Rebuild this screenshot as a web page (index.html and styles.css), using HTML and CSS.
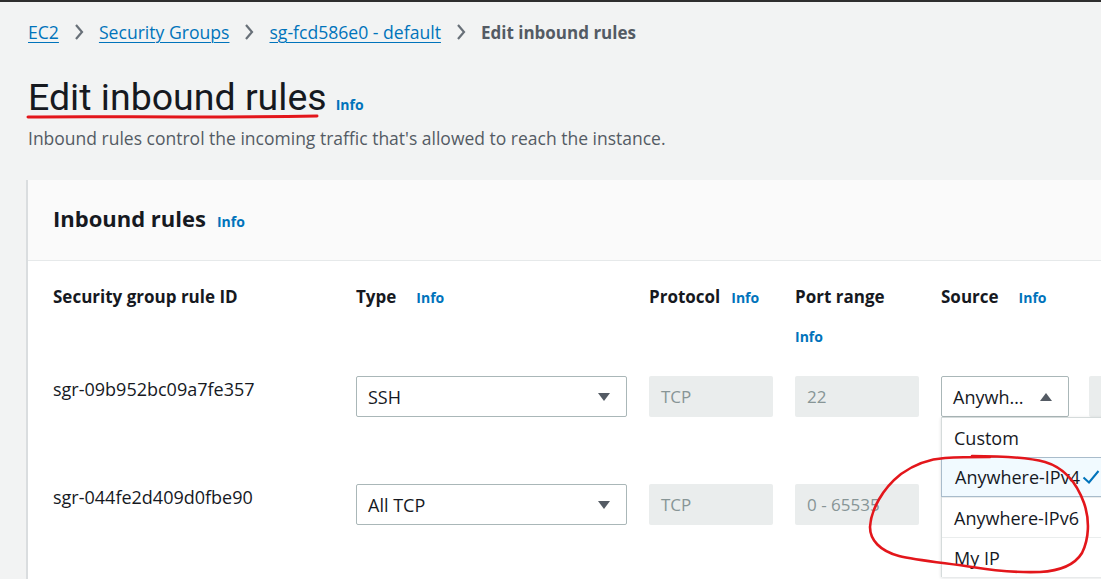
FILE: index.html
```html
<!DOCTYPE html>
<html lang="en">
<head>
<meta charset="utf-8">
<title>Edit inbound rules</title>
<link rel="stylesheet" href="styles.css">
</head>
<body>
<div class="page">
  <nav class="crumbs">
    <a class="crumb-link" href="#">EC2</a>
    <svg class="chev" viewBox="0 0 10 18" width="10" height="18"><path d="M2 2 L8 9 L2 16" fill="none" stroke="#687078" stroke-width="2.2"/></svg>
    <a class="crumb-link" href="#">Security Groups</a>
    <svg class="chev" viewBox="0 0 10 18" width="10" height="18"><path d="M2 2 L8 9 L2 16" fill="none" stroke="#687078" stroke-width="2.2"/></svg>
    <a class="crumb-link" href="#">sg-fcd586e0 - default</a>
    <svg class="chev" viewBox="0 0 10 18" width="10" height="18"><path d="M2 2 L8 9 L2 16" fill="none" stroke="#687078" stroke-width="2.2"/></svg>
    <span class="crumb-current">Edit inbound rules</span>
  </nav>

  <header class="title">
    <h1 class="h1"><span class="h1-text">Edit inbound rules</span><a class="info info-h1" href="#">Info</a></h1>
    <p class="desc">Inbound rules control the incoming traffic that's allowed to reach the instance.</p>
  </header>

  <section class="card">
    <div class="card-head">
      <h2 class="h2">Inbound rules<a class="info info-h2" href="#">Info</a></h2>
    </div>
    <div class="card-body">
      <div class="row head-row">
        <div class="th">Security group rule ID</div>
        <div class="th"><span>Type</span><a class="info gap-wide" href="#">Info</a></div>
        <div class="th"><span>Protocol</span><a class="info gap-narrow" href="#">Info</a></div>
        <div class="th th-stack"><span>Port range</span><a class="info" href="#">Info</a></div>
        <div class="th"><span>Source</span><a class="info gap-wide" href="#">Info</a></div>
        <div class="th"></div>
      </div>

      <div class="row rule-row">
        <div class="cell-id">sgr-09b952bc09a7fe357</div>
        <div class="select"><span>SSH</span><span class="tri-down"></span></div>
        <div class="ro">TCP</div>
        <div class="ro">22</div>
        <div class="src">
          <div class="select select-open"><span>Anywh…</span><span class="tri-up"></span></div>
          <ul class="dropdown">
            <li class="opt">Custom</li>
            <li class="opt opt-selected">Anywhere-IPv4
              <svg class="check" viewBox="0 0 18 16" width="18" height="16"><path d="M1.5 8.5 L7 13.5 L16.5 2" fill="none" stroke="#0073bb" stroke-width="2"/></svg>
            </li>
            <li class="opt">Anywhere-IPv6</li>
            <li class="opt">My IP</li>
          </ul>
        </div>
        <div class="ro ro-extra"></div>
      </div>

      <div class="row rule-row">
        <div class="cell-id">sgr-044fe2d409d0fbe90</div>
        <div class="select"><span>All TCP</span><span class="tri-down"></span></div>
        <div class="ro">TCP</div>
        <div class="ro">0 - 65535</div>
        <div class="src"><div class="select"><span>Custom</span><span class="tri-down"></span></div></div>
        <div class="ro ro-extra"></div>
      </div>
    </div>
  </section>
</div>

<svg class="annotation" viewBox="0 0 1101 579" width="1101" height="579">
  <path d="M28 117 C 100 116, 200 118, 317 116" fill="none" stroke="#e3161b" stroke-width="3" stroke-linecap="round"/>
  <path d="M972 456 C 1000 456, 1030 458, 1045 462 C 1062 467, 1076 481, 1084 503 C 1090 520, 1089 539, 1082 553 C 1074 566, 1058 571, 1040 572 C 1010 573, 990 570, 972 567 C 945 563, 915 560, 899 556 C 880 551, 870 540, 870 527 C 871 510, 882 489, 901 474 C 915 464, 930 459, 945 458 C 960 457, 975 457, 990 457" fill="none" stroke="#e3161b" stroke-width="2.6" stroke-linecap="round"/>
</svg>
</body>
</html>
```

FILE: styles.css
```css
html, body {
  margin: 0;
  padding: 0;
}
body {
  background: #f2f3f3;
  border-top: 2px solid #2e2e2e;
  font-family: "Open Sans", "Noto Sans", "Liberation Sans", sans-serif;
  color: #16191f;
  width: 1101px;
  height: 577px;
  overflow: hidden;
  position: relative;
}
.page {
  padding-left: 28px;
}

/* breadcrumbs */
.crumbs {
  display: flex;
  align-items: center;
  gap: 15px;
  height: 34px;
  margin-top: 13px;
  font-size: 17.6px;
}
.crumb-link {
  color: #0073bb;
  text-decoration: underline;
  text-underline-offset: 3px;
  text-decoration-thickness: 1px;
}
.chev {
  display: block;
}
.crumb-current {
  font-weight: 700;
  font-size: 17px;
  color: #545b64;
}

/* title */
.title {
  margin-top: 25px;
}
.h1 {
  margin: 0;
  height: 46px;
  font-family: Roboto, "Open Sans", sans-serif;
  font-size: 37.5px;
  line-height: 46px;
  font-weight: 400;
}
.info {
  color: #0073bb;
  font-family: "Open Sans", sans-serif;
  font-weight: 700;
  font-size: 14px;
  text-decoration: none;
}
.info-h1 {
  margin-left: 9px;
}
.desc {
  margin: 7px 0 0;
  font-size: 17.5px;
  line-height: 22px;
  color: #545b64;
}

/* card */
.card {
  margin-top: 31px;
  margin-left: -2px;
  width: 1200px;
  background: #ffffff;
  border-left: 2px solid #dadddf;
  height: 420px;
}
.card-head {
  background: #fafafa;
  height: 81px;
  box-sizing: border-box;
  padding: 24px 0 0 25px;
  border-bottom: 1px solid #e6e9ea;
}
.h2 {
  margin: 0;
  font-size: 22px;
  line-height: 28px;
  font-weight: 700;
}
.info-h2 {
  margin-left: 11px;
}
.card-body {
  padding: 25px 0 0 25px;
}
.row {
  display: grid;
  grid-template-columns: 303px 293px 146px 146px 148px 1fr;
}
.th {
  font-size: 17px;
  line-height: 22px;
  font-weight: 700;
  display: flex;
  align-items: baseline;
  gap: 12px;
}
.th .gap-wide {
  margin-left: 8px;
}
.th .gap-narrow {
  margin-left: -1px;
}
.th-stack {
  flex-direction: column;
  gap: 18px;
}
.head-row {
  margin-bottom: 28px;
}
.rule-row {
  margin-bottom: 67px;
}
.cell-id {
  font-size: 18px;
  line-height: 22px;
  padding-top: 2px;
}
.select {
  box-sizing: border-box;
  width: 271px;
  height: 41px;
  border: 1px solid #aab7b8;
  border-radius: 2px;
  background: #fff;
  display: flex;
  align-items: center;
  justify-content: space-between;
  padding: 0 16px 0 11px;
  font-size: 18px;
}
.tri-down, .tri-up {
  width: 0;
  height: 0;
  border-left: 6px solid transparent;
  border-right: 6px solid transparent;
}
.tri-down {
  border-top: 8px solid #545b64;
}
.tri-up {
  border-bottom: 8px solid #545b64;
}
.ro {
  box-sizing: border-box;
  width: 124px;
  height: 41px;
  background: #eaeded;
  border-radius: 2px;
  padding: 0 12px;
  display: flex;
  align-items: center;
  font-size: 17px;
  color: #879596;
}
.ro-extra {
  width: 100px;
}
.src {
  position: relative;
}
.src .select {
  width: 128px;
}
.dropdown {
  position: absolute;
  top: 41px;
  left: 0;
  z-index: 5;
  width: 168px;
  margin: 0;
  padding: 0;
  list-style: none;
  background: #fff;
  border-left: 1px solid #d5dbdb;
  box-shadow: 0 1px 3px rgba(0, 28, 36, 0.15);
}
.opt {
  box-sizing: border-box;
  height: 40px;
  padding: 0 12px;
  display: flex;
  align-items: center;
  font-size: 18px;
  color: #16191f;
  border-top: 1px solid #eaeded;
  position: relative;
  white-space: nowrap;
}
.opt:first-child {
  border-top: 1px solid #d5dbdb;
}
.opt-selected {
  background: #f1faff;
  border: 1px solid #a9bccb;
  margin-left: -1px;
  padding-left: 13px;
}
.check {
  position: absolute;
  left: 140px;
  top: 11px;
}

.annotation {
  position: absolute;
  left: 0;
  top: -2px;
  z-index: 10;
  pointer-events: none;
}
```
